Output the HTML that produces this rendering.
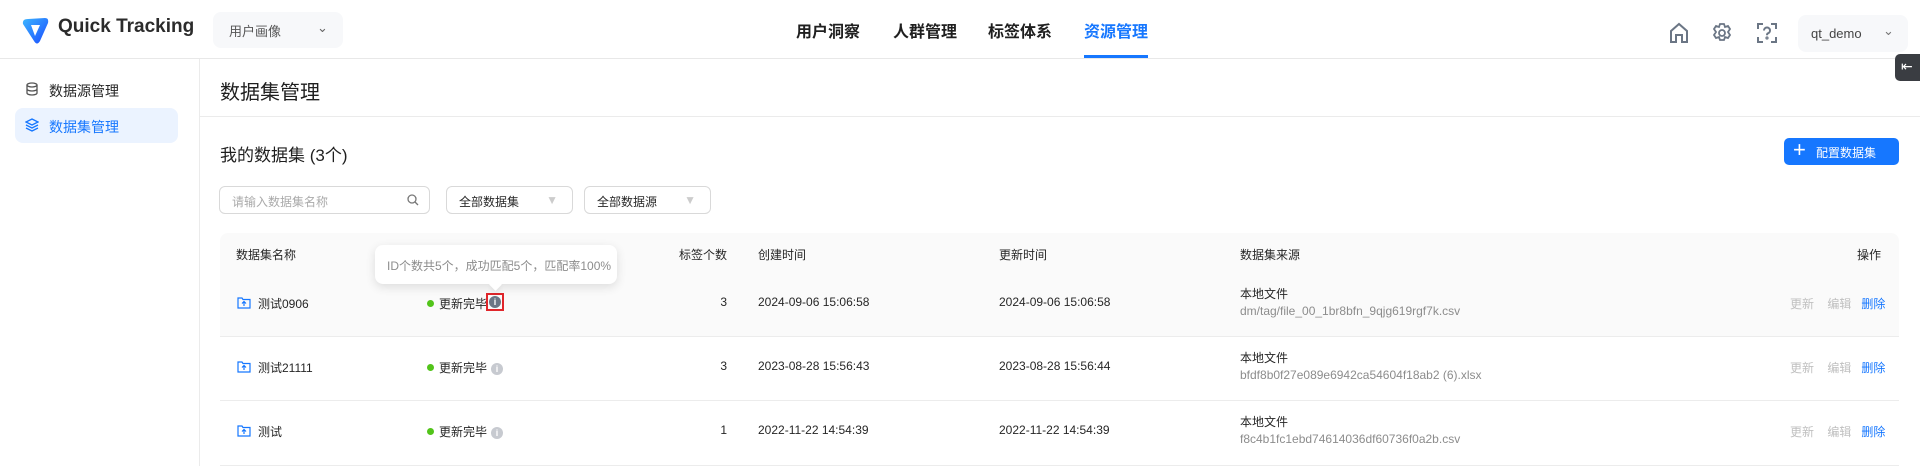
<!DOCTYPE html>
<html><head><meta charset="utf-8"><style>
*{box-sizing:border-box;margin:0;padding:0}
body{width:1920px;height:466px;overflow:hidden;background:#fff;font-family:"Liberation Sans","Noto Sans CJK SC",sans-serif;color:#262626;font-size:12px;position:relative}
.abs{position:absolute}
.hdr{left:0;top:0;width:1920px;height:59px;border-bottom:1px solid #e8e8e8}
.nav{top:18px;font-size:16px;font-weight:bold;color:#1f1f1f}
.side{left:0;top:59px;width:200px;height:407px;border-right:1px solid #ebebeb}
.row{left:220px;width:1679px;border-bottom:1px solid #ececec}
.c{position:absolute;white-space:nowrap}
.gray{color:#c0c0c0}.blue{color:#1677ff}
.dot{display:inline-block;width:7px;height:7px;border-radius:50%;background:#52c41a;margin-right:5px;vertical-align:1px}
.info{display:inline-block;width:12px;height:12px;border-radius:50%;background:#c7cad0;color:#fff;font-size:9px;text-align:center;line-height:12px;font-weight:bold;vertical-align:0;margin-left:4px}
.sel{border:1px solid #d9d9d9;border-radius:6px;height:28px;top:186px}
</style></head><body>
<div class="abs hdr"></div>
<svg class="abs" style="left:20px;top:15px" width="30" height="30" viewBox="0 0 30 30"><defs><linearGradient id="g" x1="0" y1="0" x2="1" y2="1"><stop offset="0" stop-color="#3db6ff"/><stop offset="1" stop-color="#1a4bff"/></linearGradient></defs><path d="M3 9 Q2 4 8 4 L25 3 Q29 3 28 8 L20 26 Q17 31 14 26 Z M11 10 L15 21 L20 10 Z" fill="url(#g)" fill-rule="evenodd"/></svg>
<div class="abs" style="left:58px;top:16px;font-size:19px;font-weight:bold;color:#2b2b2b">Quick Tracking</div>
<div class="abs" style="left:213px;top:12px;width:130px;height:36px;background:#f7f8fa;border-radius:8px;color:#555;font-size:13px;padding:9px 0 0 16px">用户画像<span style="position:absolute;left:104px;top:8px;color:#666">&#8964;</span></div>
<div class="abs nav" style="left:796px">用户洞察</div>
<div class="abs nav" style="left:893px">人群管理</div>
<div class="abs nav" style="left:988px">标签体系</div>
<div class="abs nav" style="left:1084px;color:#1677ff">资源管理</div>
<div class="abs" style="left:1084px;top:55px;width:64px;height:3px;background:#1677ff"></div>
<svg class="abs" style="left:1668px;top:22px" width="22" height="22" viewBox="0 0 22 22" fill="none" stroke="#6b7685" stroke-width="2"><path d="M3 9 L11 2 L19 9 V20 H14 V13 H8 V20 H3 Z"/></svg>
<svg class="abs" style="left:1711px;top:22px" width="22" height="22" viewBox="0 0 22 22" fill="none" stroke="#6b7685" stroke-width="1.8"><path d="M9 2h4l1 3 3-1 2 3-2 3 2 3-2 3-3-1-1 3H9l-1-3-3 1-2-3 2-3-2-3 2-3 3 1z"/><circle cx="11" cy="11" r="3"/></svg>
<svg class="abs" style="left:1756px;top:22px" width="22" height="22" viewBox="0 0 22 22" fill="none" stroke="#6b7685" stroke-width="2"><path d="M2 7V2h5M15 2h5v5M20 15v5h-5M7 20H2v-5"/><path d="M8 8.5a3 3 0 1 1 4 2.8c-1 .4-1 1-1 2"/><circle cx="11" cy="16" r=".6"/></svg>
<div class="abs" style="left:1798px;top:15px;width:110px;height:37px;background:#f7f8fa;border-radius:8px;font-size:13px;color:#444;padding:11px 0 0 13px">qt_demo<span style="position:absolute;left:85px;top:8px;color:#777">&#8964;</span></div>
<div class="abs" style="left:1895px;top:54px;width:30px;height:27px;background:#3a3d42;border-radius:5px;color:#fff;font-size:14px;padding:4px 0 0 6px">&#8676;</div>

<div class="abs side"></div>
<svg class="abs" style="left:25px;top:82px" width="14" height="14" viewBox="0 0 14 14" fill="none" stroke="#555" stroke-width="1.3"><ellipse cx="7" cy="3" rx="5" ry="2"/><path d="M2 3v8c0 1 2 2 5 2s5-1 5-2V3M2 7c0 1 2 2 5 2s5-1 5-2"/></svg>
<div class="abs" style="left:49px;top:81px;font-size:14px">数据源管理</div>
<div class="abs" style="left:15px;top:108px;width:163px;height:35px;background:#ebf3ff;border-radius:8px"></div>
<svg class="abs" style="left:25px;top:118px" width="14" height="14" viewBox="0 0 14 14" fill="none" stroke="#1677ff" stroke-width="1.3"><path d="M7 1 L13 4 L7 7 L1 4Z M1 7 L7 10 L13 7 M1 10 L7 13 L13 10"/></svg>
<div class="abs" style="left:49px;top:117px;font-size:14px;color:#1677ff">数据集管理</div>

<div class="abs" style="left:220px;top:76px;font-size:20px;color:#1f1f1f">数据集管理</div>
<div class="abs" style="left:200px;top:116px;width:1720px;border-top:1px solid #ebebeb"></div>
<div class="abs" style="left:220px;top:141px;font-size:17px;color:#1f1f1f">我的数据集 (3个)</div>
<div class="abs" style="left:1784px;top:138px;width:115px;height:27px;background:#1677ff;border-radius:5px;color:#fff;font-size:12px;padding:6px 0 0 12px"><span style="font-size:22px;position:absolute;left:9px;top:-2px;line-height:28px">+</span><span style="margin-left:20px">配置数据集</span></div>
<div class="abs sel" style="left:219px;width:211px;color:#aaa;padding:6px 12px">请输入数据集名称<svg style="position:absolute;right:10px;top:7px" width="12" height="12" viewBox="0 0 12 12" fill="none" stroke="#777" stroke-width="1.3"><circle cx="5" cy="5" r="4"/><path d="M8 8l3 3"/></svg></div>
<div class="abs sel" style="left:446px;width:127px;padding:6px 12px">全部数据集<span style="position:absolute;right:14px;top:6px;color:#ccc">&#9660;</span></div>
<div class="abs sel" style="left:584px;width:127px;padding:6px 12px">全部数据源<span style="position:absolute;right:14px;top:6px;color:#ccc">&#9660;</span></div>

<div class="abs" style="left:220px;top:233px;width:1679px;height:104px;background:#fafafa;border-radius:8px 8px 0 0;border-bottom:1px solid #ececec"></div>
<div class="abs" style="left:220px;top:233px;width:1679px;height:40px">
<span class="c" style="left:16px;top:13px">数据集名称</span>
<span class="c" style="left:457px;top:13px;width:50px;text-align:right">标签个数</span>
<span class="c" style="left:538px;top:13px">创建时间</span>
<span class="c" style="left:779px;top:13px">更新时间</span>
<span class="c" style="left:1020px;top:13px">数据集来源</span>
<span class="c" style="left:1637px;top:13px">操作</span>
</div>
<div class="abs" style="left:220px;top:273px;width:1679px;height:64px">
<svg class="c" style="left:17px;top:23px" width="14" height="13" viewBox="0 0 14 13" fill="none" stroke="#1677ff" stroke-width="1.2"><path d="M1 2h4l1 1.5h7V12H1Z"/><path d="M7 10V6M5 7.5 7 5.5 9 7.5"/></svg>
<span class="c" style="left:38px;top:22px">测试0906</span>
<span class="c" style="left:207px;top:22px"><span class="dot"></span>更新完毕</span>
<span class="c" style="left:266px;top:20px;width:18px;height:18px;border:2px solid #e0262b;padding:1px"><span class="info" style="background:#6b7685;margin:0;display:block">i</span></span>
<span class="c" style="left:457px;top:22px;width:50px;text-align:right">3</span>
<span class="c" style="left:538px;top:22px">2024-09-06 15:06:58</span>
<span class="c" style="left:779px;top:22px">2024-09-06 15:06:58</span>
<span class="c" style="left:1020px;top:12px">本地文件</span>
<span class="c" style="left:1020px;top:31px;color:#8c8c8c">dm/tag/file_00_1br8bfn_9qjg619rgf7k.csv</span>
<span class="c" style="left:1570px;top:22px"><span class="gray">更新</span>&nbsp;&nbsp;&nbsp;&nbsp;<span class="gray">编辑</span>&nbsp;&nbsp;&nbsp;<span class="blue">删除</span></span>
</div>
<div class="abs" style="left:375px;top:245px;width:242px;height:39px;background:#fff;border-radius:8px;box-shadow:0 3px 10px rgba(0,0,0,.12);color:#8c8c8c;padding:12px 0 0 12px">ID个数共5个，成功匹配5个，匹配率100%</div>
<div class="abs" style="left:491px;top:280px;width:9px;height:9px;background:#fff;transform:rotate(45deg);box-shadow:3px 3px 5px rgba(0,0,0,.06)"></div>

<div class="abs row" style="top:337px;height:64px">
<svg class="c" style="left:17px;top:23px" width="14" height="13" viewBox="0 0 14 13" fill="none" stroke="#1677ff" stroke-width="1.2"><path d="M1 2h4l1 1.5h7V12H1Z"/><path d="M7 10V6M5 7.5 7 5.5 9 7.5"/></svg>
<span class="c" style="left:38px;top:22px">测试21111</span>
<span class="c" style="left:207px;top:22px"><span class="dot"></span>更新完毕<span class="info">i</span></span>
<span class="c" style="left:457px;top:22px;width:50px;text-align:right">3</span>
<span class="c" style="left:538px;top:22px">2023-08-28 15:56:43</span>
<span class="c" style="left:779px;top:22px">2023-08-28 15:56:44</span>
<span class="c" style="left:1020px;top:12px">本地文件</span>
<span class="c" style="left:1020px;top:31px;color:#8c8c8c">bfdf8b0f27e089e6942ca54604f18ab2 (6).xlsx</span>
<span class="c" style="left:1570px;top:22px"><span class="gray">更新</span>&nbsp;&nbsp;&nbsp;&nbsp;<span class="gray">编辑</span>&nbsp;&nbsp;&nbsp;<span class="blue">删除</span></span>
</div>
<div class="abs row" style="top:401px;height:65px">
<svg class="c" style="left:17px;top:23px" width="14" height="13" viewBox="0 0 14 13" fill="none" stroke="#1677ff" stroke-width="1.2"><path d="M1 2h4l1 1.5h7V12H1Z"/><path d="M7 10V6M5 7.5 7 5.5 9 7.5"/></svg>
<span class="c" style="left:38px;top:22px">测试</span>
<span class="c" style="left:207px;top:22px"><span class="dot"></span>更新完毕<span class="info">i</span></span>
<span class="c" style="left:457px;top:22px;width:50px;text-align:right">1</span>
<span class="c" style="left:538px;top:22px">2022-11-22 14:54:39</span>
<span class="c" style="left:779px;top:22px">2022-11-22 14:54:39</span>
<span class="c" style="left:1020px;top:12px">本地文件</span>
<span class="c" style="left:1020px;top:31px;color:#8c8c8c">f8c4b1fc1ebd74614036df60736f0a2b.csv</span>
<span class="c" style="left:1570px;top:22px"><span class="gray">更新</span>&nbsp;&nbsp;&nbsp;&nbsp;<span class="gray">编辑</span>&nbsp;&nbsp;&nbsp;<span class="blue">删除</span></span>
</div>
</body></html>
